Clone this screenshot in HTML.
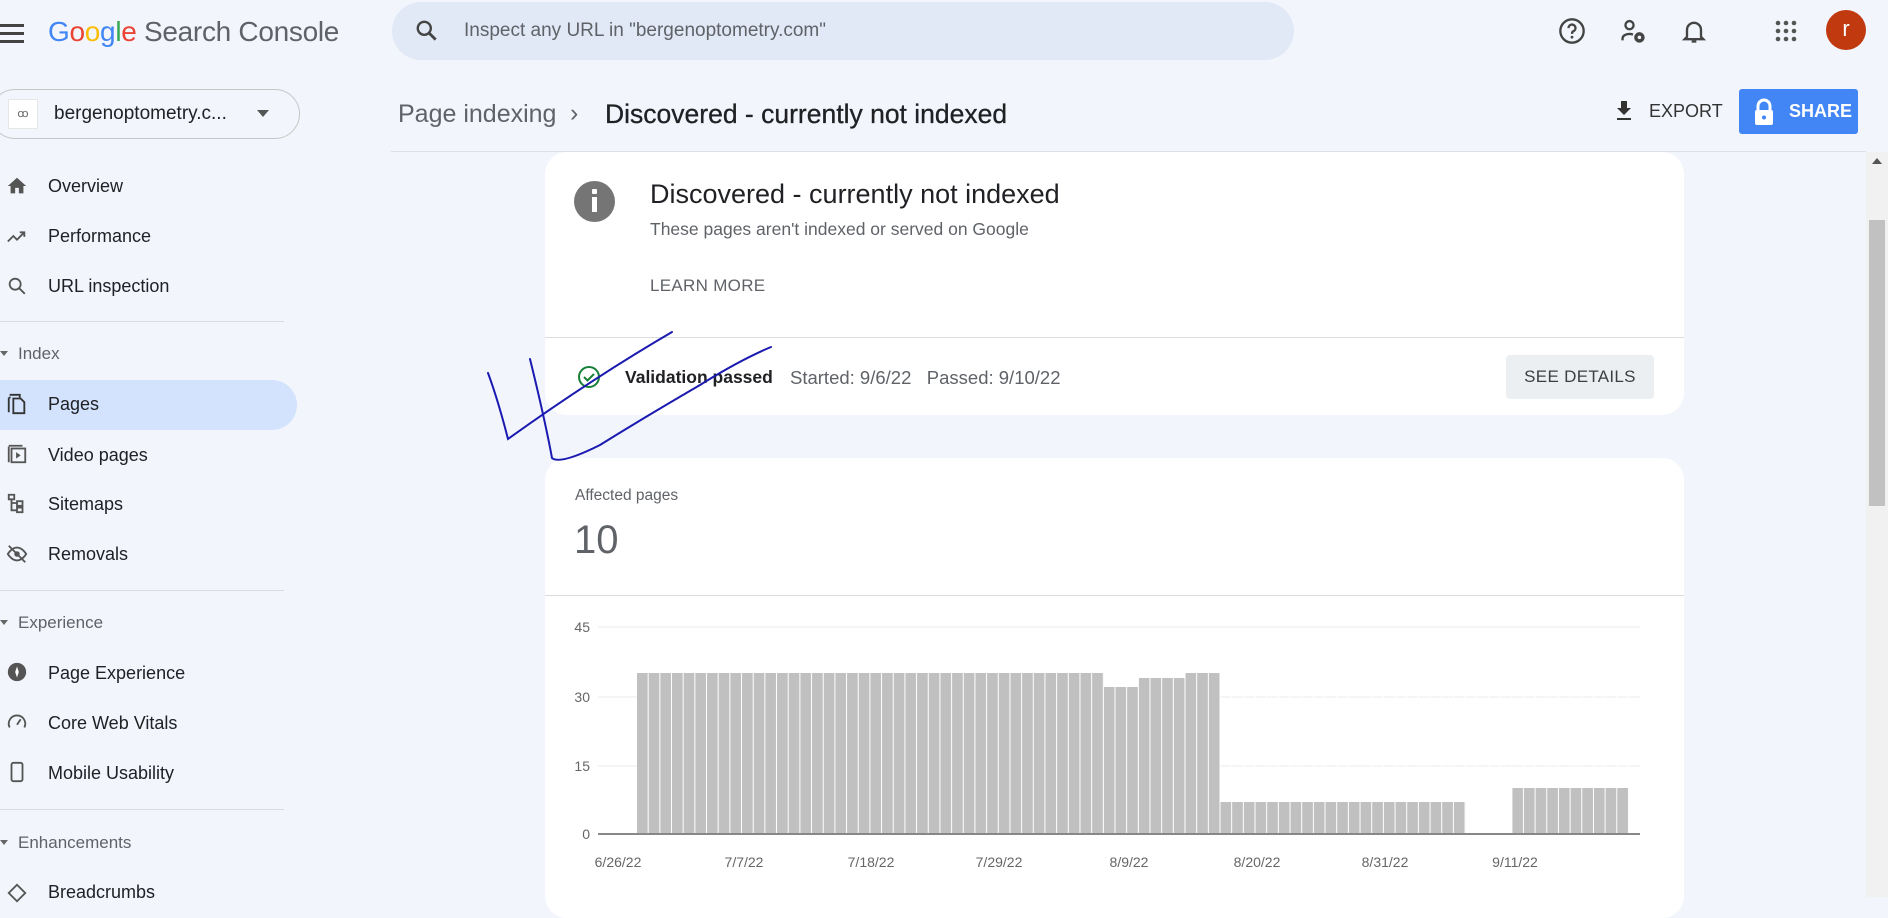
<!DOCTYPE html>
<html><head><meta charset="utf-8"><style>
*{box-sizing:border-box;margin:0;padding:0}
body{width:1888px;height:897px;overflow:hidden;background:#f2f6fc;font-family:"Liberation Sans",Arial,sans-serif;color:#202124;position:relative}
.abs{position:absolute}
.nav{position:absolute;left:48px;font-size:18px;color:#202124}
.ico{position:absolute;left:6px}
.sec{position:absolute;left:18px;font-size:17px;color:#5f6368}
.div{position:absolute;left:0;width:284px;height:1px;background:#dadce0}
.card{position:absolute;left:545px;width:1139px;background:#fff;border-radius:22px}
</style></head><body>
<!-- top bar -->
<div class="abs" style="left:0;top:24px;width:24px">
<div style="height:3px;background:#444;margin-bottom:5px"></div><div style="height:3px;background:#444;margin-bottom:5px"></div><div style="height:3px;background:#444"></div></div>
<div class="abs" style="left:48px;top:16px;font-size:28px;letter-spacing:-0.3px"><span style="color:#4285f4">G</span><span style="color:#ea4335">o</span><span style="color:#fbbc05">o</span><span style="color:#4285f4">g</span><span style="color:#34a853">l</span><span style="color:#ea4335">e</span> <span style="color:#5f6368">Search Console</span></div>
<div class="abs" style="left:392px;top:2px;width:902px;height:58px;border-radius:29px;background:#e1e9f6"></div>
<svg class="abs" style="left:414px;top:18px" width="26" height="26" viewBox="0 0 24 24"><circle cx="9.5" cy="9.5" r="6" fill="none" stroke="#444" stroke-width="2.2"/><path d="M14 14l6 6" stroke="#444" stroke-width="2.6"/></svg>
<div class="abs" style="left:464px;top:20px;font-size:19px;color:#5f6368">Inspect any URL in "bergenoptometry.com"</div>
<svg class="abs" style="left:1558px;top:17px" width="28" height="28" viewBox="0 0 24 24"><circle cx="12" cy="12" r="10" fill="none" stroke="#444" stroke-width="2"/><path d="M9 9.5a3 3 0 1 1 4 2.8c-1 .5-1 1.2-1 2.2" fill="none" stroke="#444" stroke-width="2"/><circle cx="12" cy="17.3" r="1.2" fill="#444"/></svg>
<svg class="abs" style="left:1619px;top:17px" width="28" height="28" viewBox="0 0 24 24"><circle cx="9" cy="7" r="3.5" fill="none" stroke="#444" stroke-width="2"/><path d="M3 20v-1.5c0-2.5 3-4 6-4 1 0 2 .2 3 .5" fill="none" stroke="#444" stroke-width="2"/><circle cx="17.5" cy="17.5" r="3" fill="none" stroke="#444" stroke-width="3"/></svg>
<svg class="abs" style="left:1680px;top:16px" width="28" height="30" viewBox="0 0 24 24"><path d="M6 17V11a6 6 0 0 1 12 0v6l2 2H4z" fill="none" stroke="#444" stroke-width="2"/><path d="M10 21h4" stroke="#444" stroke-width="2"/></svg>
<svg class="abs" style="left:1775px;top:20px" width="22" height="22" viewBox="0 0 22 22" fill="#555"><circle cx="3" cy="3" r="2.3"/><circle cx="11" cy="3" r="2.3"/><circle cx="19" cy="3" r="2.3"/><circle cx="3" cy="11" r="2.3"/><circle cx="11" cy="11" r="2.3"/><circle cx="19" cy="11" r="2.3"/><circle cx="3" cy="19" r="2.3"/><circle cx="11" cy="19" r="2.3"/><circle cx="19" cy="19" r="2.3"/></svg>
<div class="abs" style="left:1826px;top:10px;width:40px;height:40px;border-radius:50%;background:#c1390f;color:#fff;font-size:22px;text-align:center;line-height:38px">r</div>
<!-- property -->
<div class="abs" style="left:-10px;top:89px;width:310px;height:50px;border:1px solid #c4c7c5;border-radius:25px"></div>
<div class="abs" style="left:8px;top:99px;width:30px;height:30px;background:#fff;border:1px solid #e6e6e6;font-size:11px;color:#666;text-align:center;line-height:28px">ꝏ</div>
<div class="abs" style="left:54px;top:103px;font-size:19px">bergenoptometry.c...</div>
<div class="abs" style="left:257px;top:110px;width:0;height:0;border-left:6px solid transparent;border-right:6px solid transparent;border-top:7px solid #555"></div>
<!-- nav -->
<div class="abs" style="left:0;top:380px;width:297px;height:50px;background:#d3e3fd;border-radius:0 25px 25px 0"></div>
<svg class="ico" style="top:175px" width="22" height="22" viewBox="0 0 24 24"><path d="M12 3L2 12h3v8h5v-6h4v6h5v-8h3z" fill="#555"/></svg>
<div class="nav" style="top:176px">Overview</div>
<svg class="ico" style="top:225px" width="22" height="22" viewBox="0 0 24 24"><path d="M2 18l6-6 4 4 8-8M15 8h5v5" fill="none" stroke="#555" stroke-width="2"/></svg>
<div class="nav" style="top:226px">Performance</div>
<svg class="ico" style="top:275px" width="22" height="22" viewBox="0 0 24 24"><circle cx="10" cy="10" r="6" fill="none" stroke="#555" stroke-width="2"/><path d="M14.5 14.5l6 6" stroke="#555" stroke-width="2"/></svg>
<div class="nav" style="top:276px">URL inspection</div>
<div class="div" style="top:321px"></div>
<div class="abs" style="left:0;top:351px;border-left:4px solid transparent;border-right:4px solid transparent;border-top:5px solid #666"></div>
<div class="sec" style="top:344px">Index</div>
<svg class="ico" style="top:392px" width="22" height="24" viewBox="0 0 24 24"><path d="M4 2h11v3M3 5v16M3 5h2" fill="none" stroke="#333" stroke-width="2"/><path d="M8 6h8l4 4v12H8z" fill="none" stroke="#333" stroke-width="2"/></svg>
<div class="nav" style="top:394px">Pages</div>
<svg class="ico" style="top:443px" width="22" height="22" viewBox="0 0 24 24"><rect x="6" y="6" width="15" height="15" fill="none" stroke="#555" stroke-width="2"/><path d="M3 4v17M3 3h15" stroke="#555" stroke-width="2"/><path d="M11 10l5 3.5-5 3.5z" fill="#555"/></svg>
<div class="nav" style="top:445px">Video pages</div>
<svg class="ico" style="top:492px" width="22" height="22" viewBox="0 0 24 24"><path d="M3 3h6v5H3zM12 10h6v5h-6zM12 17h6v5h-6zM6 8v12h6M6 12h6" fill="none" stroke="#555" stroke-width="2"/></svg>
<div class="nav" style="top:494px">Sitemaps</div>
<svg class="ico" style="top:543px" width="22" height="22" viewBox="0 0 24 24"><path d="M2 12s4-7 10-7 10 7 10 7-4 7-10 7S2 12 2 12z" fill="none" stroke="#555" stroke-width="2"/><circle cx="12" cy="12" r="3" fill="#555"/><path d="M3 3l18 18" stroke="#555" stroke-width="2"/></svg>
<div class="nav" style="top:544px">Removals</div>
<div class="div" style="top:590px"></div>
<div class="abs" style="left:0;top:620px;border-left:4px solid transparent;border-right:4px solid transparent;border-top:5px solid #666"></div>
<div class="sec" style="top:613px">Experience</div>
<svg class="ico" style="top:661px" width="22" height="22" viewBox="0 0 24 24"><circle cx="12" cy="12" r="10" fill="#555"/><path d="M12 6l2 6h-4z M12 18l-2-6h4z" fill="#fff"/></svg>
<div class="nav" style="top:663px">Page Experience</div>
<svg class="ico" style="top:711px" width="22" height="22" viewBox="0 0 24 24"><path d="M4 18a9 9 0 1 1 16 0" fill="none" stroke="#555" stroke-width="2"/><path d="M12 15l4-6" stroke="#555" stroke-width="2"/></svg>
<div class="nav" style="top:713px">Core Web Vitals</div>
<svg class="ico" style="top:760px" width="22" height="24" viewBox="0 0 24 24"><rect x="6" y="2" width="12" height="20" rx="2" fill="none" stroke="#555" stroke-width="2"/></svg>
<div class="nav" style="top:763px">Mobile Usability</div>
<div class="div" style="top:809px"></div>
<div class="abs" style="left:0;top:840px;border-left:4px solid transparent;border-right:4px solid transparent;border-top:5px solid #666"></div>
<div class="sec" style="top:833px">Enhancements</div>
<svg class="ico" style="top:882px" width="22" height="22" viewBox="0 0 24 24"><path d="M12 3l9 9-9 9-9-9z" fill="none" stroke="#555" stroke-width="2"/></svg>
<div class="nav" style="top:882px">Breadcrumbs</div>
<!-- card 1 -->
<div class="card" style="top:152px;height:263px;border-radius:22px 22px 22px 22px"></div>
<!-- header -->
<div class="abs" style="left:398px;top:100px;font-size:25px;color:#5f6368">Page indexing</div>
<div class="abs" style="left:570px;top:99px;font-size:25px;color:#5f6368">›</div>
<div class="abs" style="left:605px;top:99px;font-size:26.5px;color:#202124;-webkit-text-stroke:0.3px #202124">Discovered - currently not indexed</div>
<svg class="abs" style="left:1612px;top:98px" width="24" height="24" viewBox="0 0 24 24"><path d="M9 3h6v7h4l-7 7-7-7h4z M5 20h14v2H5z" fill="#333"/></svg>
<div class="abs" style="left:1649px;top:101px;font-size:18px;color:#333">EXPORT</div>
<div class="abs" style="left:1739px;top:89px;width:119px;height:45px;background:#4285f4;border-radius:3px"></div>
<svg class="abs" style="left:1752px;top:98px" width="24" height="28" viewBox="0 0 24 28"><path d="M6 12V8a6 6 0 0 1 12 0v4" fill="none" stroke="#fff" stroke-width="3"/><rect x="3" y="12" width="18" height="15" rx="2" fill="#fff"/><circle cx="12" cy="19.5" r="2" fill="#4285f4"/></svg>
<div class="abs" style="left:1789px;top:101px;font-size:18px;color:#fff;font-weight:bold">SHARE</div>
<div class="abs" style="left:391px;top:151px;width:1475px;height:1px;background:#dde1e6"></div>
<!-- scrollbar -->
<div class="abs" style="left:1866px;top:152px;width:22px;height:745px;background:#f1f1f1"></div>
<div class="abs" style="left:1869px;top:220px;width:16px;height:286px;background:#c1c1c1"></div>
<div class="abs" style="left:1872px;top:158px;border-left:5px solid transparent;border-right:5px solid transparent;border-bottom:6px solid #555"></div>
<div class="abs" style="left:574px;top:181px;width:41px;height:41px;border-radius:50%;background:#757575"></div>
<div class="abs" style="left:592px;top:189px;width:5px;height:5px;background:#fff;border-radius:1px"></div>
<div class="abs" style="left:592px;top:197px;width:5px;height:15px;background:#fff"></div>
<div class="abs" style="left:650px;top:179px;font-size:27px;color:#202124">Discovered - currently not indexed</div>
<div class="abs" style="left:650px;top:219px;font-size:17.5px;color:#5f6368">These pages aren't indexed or served on Google</div>
<div class="abs" style="left:650px;top:276px;font-size:17px;color:#5f6368;letter-spacing:.3px">LEARN MORE</div>
<div class="abs" style="left:545px;top:337px;width:1139px;height:1px;background:#dadce0"></div>
<svg class="abs" style="left:577px;top:365px" width="24" height="24" viewBox="0 0 24 24"><circle cx="12" cy="12" r="10" fill="none" stroke="#188038" stroke-width="2"/><path d="M7 12l3.5 3.5L17 9" fill="none" stroke="#188038" stroke-width="2"/></svg>
<div class="abs" style="left:625px;top:367px;font-size:17.5px;font-weight:bold">Validation passed</div>
<div class="abs" style="left:790px;top:367px;font-size:18.5px;color:#5f6368">Started: 9/6/22&nbsp;&nbsp;&nbsp;Passed: 9/10/22</div>
<div class="abs" style="left:1506px;top:355px;width:148px;height:44px;background:#eceff1;border-radius:4px;font-size:17px;color:#3c4043;text-align:center;line-height:44px;letter-spacing:.3px">SEE DETAILS</div>
<!-- card 2 -->
<div class="card" style="top:458px;height:460px"></div>
<div class="abs" style="left:575px;top:487px;font-size:15.5px;color:#5f6368">Affected pages</div>
<div class="abs" style="left:574px;top:518px;font-size:40px;color:#5f6368">10</div>
<div class="abs" style="left:545px;top:595px;width:1139px;height:1px;background:#dadce0"></div>
<svg class="abs" style="left:0;top:0" width="1888" height="897">
<defs><pattern id="gp" patternUnits="userSpaceOnUse" x="637" y="0" width="11.67" height="897"><rect x="10.67" y="0" width="1" height="897" fill="#fff"/></pattern></defs>
<g stroke="#ebebeb" stroke-width="1"><line x1="598" y1="627" x2="1640" y2="627"/><line x1="598" y1="697" x2="1640" y2="697"/><line x1="598" y1="766" x2="1640" y2="766"/></g>
<g fill="#c0c0c0">
<rect x="637" y="673" width="466.8" height="161"/>
<rect x="1103.8" y="687" width="35" height="147"/>
<rect x="1138.8" y="678" width="46.7" height="156"/>
<rect x="1185.5" y="673" width="35" height="161"/>
<rect x="1220.5" y="802" width="245.1" height="32"/>
<rect x="1512.3" y="788" width="116.7" height="46"/>
</g>
<rect x="637" y="660" width="993" height="174" fill="url(#gp)"/>
<line x1="598" y1="834" x2="1640" y2="834" stroke="#888" stroke-width="2"/>
<g font-family="Liberation Sans, sans-serif" font-size="14" fill="#666" text-anchor="end"><text x="590" y="632">45</text><text x="590" y="702">30</text><text x="590" y="771">15</text><text x="590" y="839">0</text></g>
<g font-family="Liberation Sans, sans-serif" font-size="14" fill="#666" text-anchor="middle"><text x="618" y="867">6/26/22</text><text x="744" y="867">7/7/22</text><text x="871" y="867">7/18/22</text><text x="999" y="867">7/29/22</text><text x="1129" y="867">8/9/22</text><text x="1257" y="867">8/20/22</text><text x="1385" y="867">8/31/22</text><text x="1515" y="867">9/11/22</text></g>
<g fill="none" stroke="#1a1ab0" stroke-width="2" stroke-linecap="round">
<path d="M488 373 Q498 400 508 439 Q590 380 672 332"/>
<path d="M530 359 Q545 420 552 458 Q560 465 600 445 Q640 420 700 385 Q740 360 771 347"/>
</g>
</svg>
</body></html>
